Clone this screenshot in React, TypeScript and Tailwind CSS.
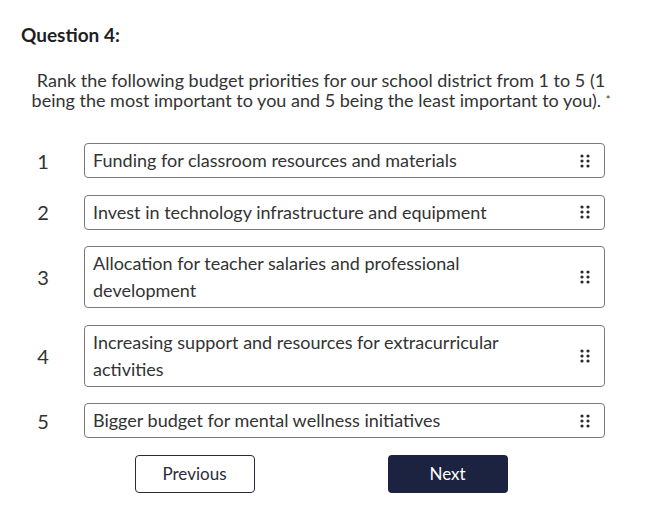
import React from 'react';

const items = [
  'Funding for classroom resources and materials',
  'Invest in technology infrastructure and equipment',
  'Allocation for teacher salaries and professional development',
  'Increasing support and resources for extracurricular activities',
  'Bigger budget for mental wellness initiatives',
];

const DragHandle = () => (
  <svg width="10" height="14" viewBox="0 0 10 14" className="shrink-0">
    {[2, 7, 12].map(y => (
      <React.Fragment key={y}>
        <circle cx="2" cy={y} r="1.6" fill="#2a2a2a" />
        <circle cx="8" cy={y} r="1.6" fill="#2a2a2a" />
      </React.Fragment>
    ))}
  </svg>
);

const App: React.FC = () => {
  return (
    <div className="w-[663px] h-[530px] bg-white text-[#333] pl-[21px] pr-[42px] pt-[23px]" style={{ fontFamily: 'Lato, "Open Sans", sans-serif' }}>
      <h2 className="text-[19px] font-bold text-[#1f1f1f] leading-[24px]">Question 4:</h2>
      <p className="mt-[23px] text-center text-[18px] leading-[20px] text-[#333]">
        Rank the following budget priorities for our school district from 1 to 5 (1 being the most important to you and 5 being the least important to you).{' '}
        <span className="text-[11px] align-top text-[#333]">*</span>
      </p>
      <div className="mt-[33px] flex flex-col gap-[16.5px]">
        {items.map((text, i) => (
          <div key={i} className="flex items-center">
            <div className="w-[44px] text-center text-[20px] text-[#333]">{i + 1}</div>
            <div className="ml-[19px] w-[521px] flex items-center border border-[#7a7a7a] rounded-[4px] pl-[8px] pr-[14px] py-[3px] bg-white">
              <span className="flex-1 text-[18px] leading-[27px] text-[#333] pr-[30px]">{text}</span>
              <DragHandle />
            </div>
          </div>
        ))}
      </div>
      <div className="mt-[17px] flex justify-center gap-[133px]">
        <button className="w-[120px] h-[38px] border border-[#2a2a3a] rounded-[4px] bg-white text-[17px] text-[#2b2b3a]">Previous</button>
        <button className="w-[120px] h-[38px] rounded-[4px] bg-[#1b2340] text-[17px] text-white">Next</button>
      </div>
    </div>
  );
};

export default App;
